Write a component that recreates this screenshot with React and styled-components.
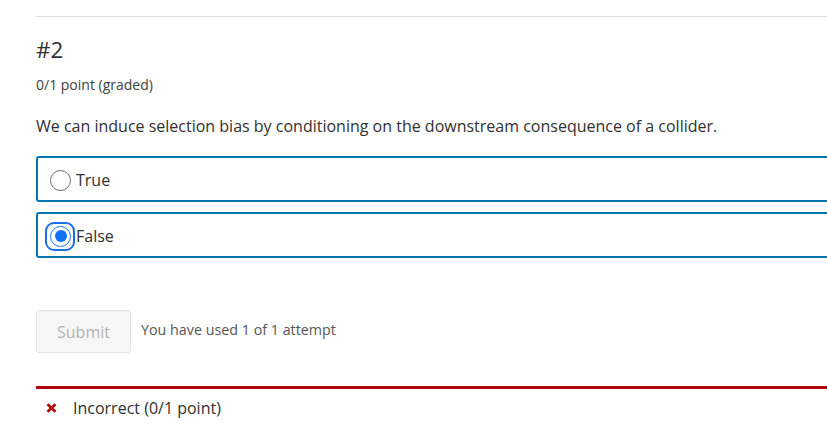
import React from "react";
import styled, { createGlobalStyle } from "styled-components";

const Global = createGlobalStyle`
  html, body { margin: 0; padding: 0; background: #fff; overflow: hidden; }
  body { font-family: "Open Sans", "Noto Sans", sans-serif; color: #313131; }
`;

const Page = styled.div`
  width: 940px;
  padding: 16px 0 0 36px;
`;

const Divider = styled.hr`
  margin: 0;
  border: 0;
  border-top: 1px solid #dddddd;
`;

const Title = styled.h3`
  margin: 18px 0 0;
  font-size: 22.4px;
  line-height: 30px;
  font-weight: 400;
  color: #313131;
`;

const Meta = styled.div`
  margin-top: 10px;
  font-size: 14px;
  line-height: 19px;
  color: #414141;
`;

const Question = styled.p`
  margin: 21px 0 0;
  font-size: 16px;
  line-height: 23px;
  color: #313131;
`;

const Options = styled.div`
  margin-top: 18px;
  display: flex;
  flex-direction: column;
  gap: 10px;
`;

const Option = styled.label`
  display: flex;
  align-items: center;
  gap: 5px;
  height: 42px;
  padding: 2px 0 0 12px;
  box-sizing: content-box;
  height: 40px;
  border: 2px solid #0075b4;
  border-radius: 3px;
  font-size: 16px;
  color: #313131;
`;

const RadioSlot = styled.span`
  position: relative;
  display: inline-flex;
  align-items: center;
  justify-content: center;
  width: 21px;
  height: 21px;
`;

const RadioCircle = styled.span`
  box-sizing: border-box;
  width: 21px;
  height: 21px;
  border-radius: 50%;
  border: ${(p) => (p.$checked ? "1.5px solid #1172f5" : "1px solid #6b6b6b")};
  background: #fff;
  display: flex;
  align-items: center;
  justify-content: center;
`;

const RadioDot = styled.span`
  width: 12px;
  height: 12px;
  border-radius: 50%;
  background: #1172f5;
`;

const FocusRing = styled.span`
  position: absolute;
  left: -5px;
  top: -4px;
  right: -4px;
  bottom: -4px;
  border: 2.5px solid #1a6ee8;
  border-radius: 9px;
  pointer-events: none;
`;

const Actions = styled.div`
  margin-top: 52px;
  display: flex;
  align-items: center;
  gap: 10px;
`;

const SubmitButton = styled.button`
  box-sizing: border-box;
  width: 95px;
  height: 43px;
  border: 1px solid #e4e4e4;
  border-radius: 3px;
  background: #f6f6f6;
  color: #b3b3b3;
  font-family: "Open Sans", sans-serif;
  font-size: 16px;
  padding: 0;
`;

const Attempts = styled.span`
  font-size: 14.3px;
  color: #555;
  margin-top: -5px;
`;

const Feedback = styled.div`
  margin-top: 33px;
  border-top: 3px solid #b20610;
  display: flex;
  align-items: center;
  gap: 16px;
  padding: 8px 0 0 10px;
  font-size: 16px;
  color: #313131;
`;

const XIcon = () => (
  <svg width="11" height="10" viewBox="0 0 11 10">
    <path d="M1.5 1.2 L9.5 8.8 M9.5 1.2 L1.5 8.8" stroke="#b20610" strokeWidth="2.8" strokeLinecap="butt" />
  </svg>
);

const Radio = ({ checked }) => (
  <RadioSlot>
    <RadioCircle $checked={checked}>{checked && <RadioDot />}</RadioCircle>
    {checked && <FocusRing />}
  </RadioSlot>
);

export default function App() {
  return (
    <>
      <Global />
      <Page>
        <Divider />
        <Title>#2</Title>
        <Meta>0/1 point (graded)</Meta>
        <Question>
          We can induce selection bias by conditioning on the downstream consequence of a collider.
        </Question>
        <Options>
          <Option>
            <Radio checked={false} />
            True
          </Option>
          <Option>
            <Radio checked />
            False
          </Option>
        </Options>
        <Actions>
          <SubmitButton disabled>Submit</SubmitButton>
          <Attempts>You have used 1 of 1 attempt</Attempts>
        </Actions>
        <Feedback>
          <XIcon />
          Incorrect (0/1 point)
        </Feedback>
      </Page>
    </>
  );
}
